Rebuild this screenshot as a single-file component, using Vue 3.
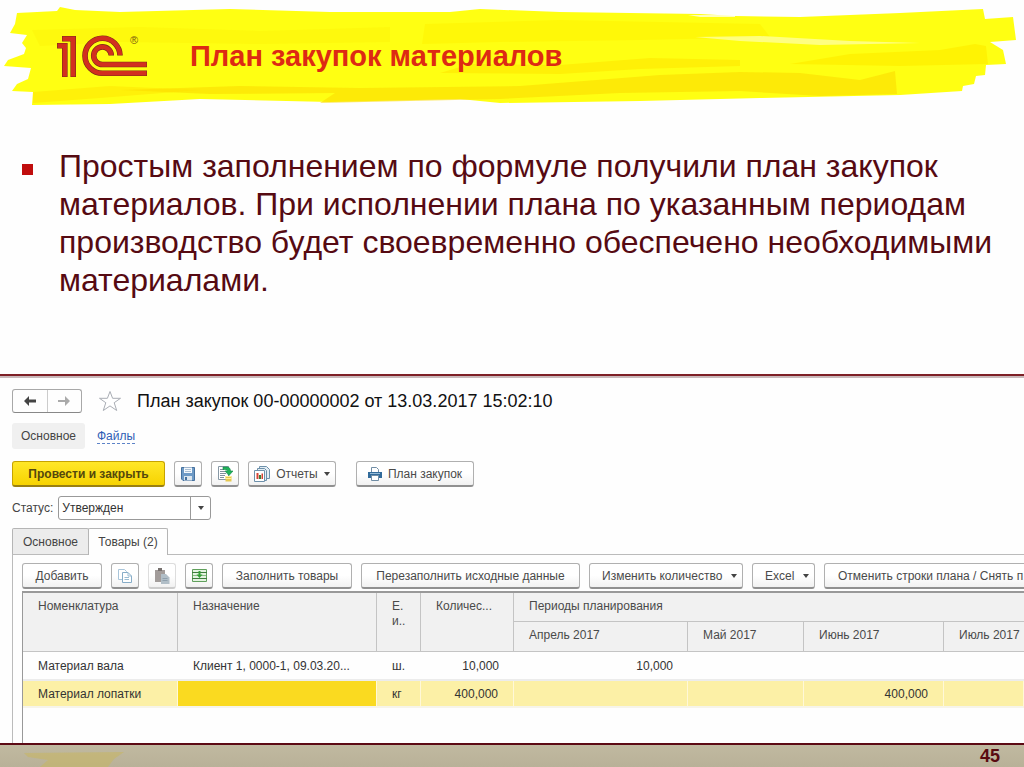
<script setup>
import { ref } from 'vue'

const status = ref('Утвержден')
const months = ['Апрель 2017', 'Май 2017', 'Июнь 2017', 'Июль 2017']
const rows = [
  { name: 'Материал вала', purpose: 'Клиент 1, 0000-1, 09.03.20...', unit: 'ш.', qty: '10,000', plan: ['10,000', '', '', ''] },
  { name: 'Материал лопатки', purpose: '', unit: 'кг', qty: '400,000', plan: ['', '', '400,000', ''], selected: true },
]
</script>

<template>
  <div class="slide">
    <header class="banner">
      <svg class="brush" viewBox="0 0 1024 108" preserveAspectRatio="none" aria-hidden="true">
        <path fill="#ffff12" d="M17 13L57 11L60 7L75 10L120 12L230 9L330 12L450 12L480 9L560 12L700 14L735 16L800 17L900 13L983 9L985 19L1013 17L1016 40L990 42L1003 50L1006 64L986 65L985 75L976 76L974 84L963 86L962 91L900 95L760 98L640 101L500 103L460 99L330 102L200 99L110 104L32 105L33 92L12 91L17 84L28 79L31 68L4 66L8 60L24 54L26 48L22 43L27 35L10 33L15 24Z" />
        <path fill="#fff200" opacity=".55" d="M425 24L560 20L760 24L770 37L640 40L500 42L422 44Z" />
        <path fill="#fbe800" opacity=".28" d="M32 30L140 27L260 31L390 27L390 42L260 44L120 42L40 46Z" />
        <path fill="#ffe600" opacity=".6" d="M470 64L560 65L650 58L740 60L740 66L640 69L560 74L440 73Z" />
        <path fill="#fbdc00" opacity=".6" d="M120 90L240 86L360 88L520 86L660 75L740 72L800 73L860 80L895 71L897 94L820 96L740 91L620 93L500 99L320 103L335 93L210 94Z" />
        <path fill="#fff000" opacity=".8" d="M790 64L850 54L940 50L975 44L986 46L988 64L900 66Z" />
        <path fill="#ffe000" opacity=".45" d="M33 92L110 86L200 90L100 98L33 103Z" />
        <path fill="#ffff9c" opacity=".8" d="M695 37L760 36L850 41L920 43L820 45L740 41Z" />
        <path fill="#fff" opacity=".7" d="M688 15L735 15L735 17L700 17Z" />
      </svg>
      <svg class="logo" viewBox="0 0 92 44" role="img" aria-label="1С">
        <g fill="none" stroke="#7e2c18" stroke-width="5.6">
          <path d="M1 10.8H8.800V42M6 3.800H17.200V42" />
          <path d="M64 20.500A17.500 17.500 0 1 0 46.500 38.300H91" />
          <path d="M55.300 20.500A8.800 8.800 0 1 0 46.500 29.500H91" />
        </g>
        <g fill="none" stroke="#d2301f" stroke-width="4.400">
          <path d="M1.600 10.800H8.800V41.500M6.600 3.800H17.200V41.500" />
          <path d="M64 20A17.500 17.500 0 1 0 46.500 38.300H90.500" />
          <path d="M55.300 20A8.800 8.800 0 1 0 46.500 29.500H90.500" />
        </g>
      </svg>
      <span class="reg">®</span>
      <h1>План закупок материалов</h1>
    </header>

    <ul class="points">
      <li>Простым заполнением по формуле получили план закупок материалов. При исполнении плана по указанным периодам производство будет своевременно обеспечено необходимыми материалами.</li>
    </ul>

    <main class="window">
      <div class="titlebar">
        <div class="nav">
          <button type="button" aria-label="Назад"><svg width="14" height="10" viewBox="0 0 14 10"><path d="M6 0L1 5L6 10V6.500H13V3.500H6Z" fill="#444" /></svg></button>
          <button type="button" aria-label="Вперед"><svg width="14" height="10" viewBox="0 0 14 10"><path d="M8 0L13 5L8 10V6H1V4H8Z" fill="#aaa" /></svg></button>
        </div>
        <button type="button" class="star" aria-label="Избранное"><svg width="24" height="22" viewBox="0 0 24 22"><path d="M12 1.500L14.600 8.300H22.500L16.200 12.700L18.700 20.500L12 15.900L5.300 20.500L7.800 12.700L1.500 8.300H9.400Z" fill="#fff" stroke="#a9adb4" /></svg></button>
        <h2>План закупок 00-00000002 от 13.03.2017 15:02:10</h2>
      </div>

      <nav class="sections">
        <a href="#main" class="current">Основное</a>
        <a href="#files" class="files"><span>Файлы</span></a>
      </nav>

      <div class="commands">
        <button type="button" class="btn primary">Провести и закрыть</button>
        <button type="button" class="btn icon" aria-label="Записать">
          <svg width="16" height="16" viewBox="0 0 16 16"><path d="M1.500 1.500H14.500V14.500H3L1.500 13Z" fill="#6e9ac6" stroke="#46719e" /><path d="M4 1.500H12V7H4Z" fill="#f4f8fc" /><path d="M5 3.500H11M5 5.500H11" stroke="#a9bfd4" /><path d="M4 10H12V14.500H4Z" fill="#dce6ee" /><path d="M5 11H7V14H5Z" fill="#46719e" /></svg>
        </button>
        <button type="button" class="btn icon" aria-label="Провести">
          <svg width="16" height="16" viewBox="0 0 16 16"><path d="M1.500.500H11.500V13.500H1.500Z" fill="#fff" stroke="#8798a5" /><path d="M3 3.500H7M3 5.500H8M3 7.500H9M3 9.500H8M3 11.500H7" stroke="#80909c" /><path d="M6 1H10C12.500 1 13.500 3 13.500 5H16L12 9.500L8 5H10.500C10.500 4 9 3.500 6 3.500Z" fill="#1fb25a" stroke="#118744" stroke-width=".6" /><path d="M8.500 10H14.500V15.500H8.500Z" fill="#e6c84f" /><path d="M8.500 10.500H14.500M8.500 12.500H14.500" stroke="#fff09b" /></svg>
        </button>
        <button type="button" class="btn reports">
          <svg width="16" height="16" viewBox="0 0 16 16"><path d="M5.500.500H12.500L15.500 3.500V12.500H5.500Z" fill="#e3edf4" stroke="#6e91ab" /><path d="M3.500 2.500H10.500L12.500 4.500V14.500H3.500Z" fill="#e3edf4" stroke="#6e91ab" /><path d="M.500 4.500H10.500V15.500H.500Z" fill="#fff" stroke="#6e91ab" /><path d="M2.500 7H4.500V13H2.500Z" fill="#d64435" /><path d="M5 9H7V13H5Z" fill="#397f3a" /><path d="M7.500 7.500H9V13H7.500Z" fill="#d64435" /></svg>
          Отчеты<i class="caret"></i>
        </button>
        <button type="button" class="btn print">
          <svg width="14" height="14" viewBox="0 0 14 14"><path d="M3.500 5V.500H8.500L10.500 2.500V5" fill="#fff" stroke="#708da5" /><path d="M0 5H14V11H0Z" fill="#326b9b" /><path d="M2 6.500H12" stroke="#94b9d5" /><path d="M3.500 8.500H10.500V13.500H3.500Z" fill="#fff" stroke="#708da5" /></svg>
          План закупок
        </button>
      </div>

      <div class="status">
        <label for="status">Статус:</label>
        <div class="combo">
          <input id="status" v-model="status" type="text" />
          <button type="button" aria-label="Выбрать статус"><i class="caret"></i></button>
        </div>
      </div>

      <div class="tabs" role="tablist">
        <button type="button" role="tab" aria-selected="false">Основное</button>
        <button type="button" role="tab" aria-selected="true" class="active">Товары (2)</button>
      </div>

      <section class="pane">
        <div class="tools">
          <button type="button" class="btn add">Добавить</button>
          <button type="button" class="btn icon" aria-label="Скопировать">
            <svg width="14" height="14" viewBox="0 0 14 14"><path d="M.500.500H6.500L8.500 2.500V10.500H.500Z" fill="#fff" stroke="#a9c5da" /><path d="M4.500 3.500H10L13.500 7V13.500H4.500Z" fill="#fff" stroke="#87adc8" /><path d="M10 3.500V7H13.500M6.500 8.500H11M6.500 10.500H11" fill="none" stroke="#9bbdd3" /></svg>
          </button>
          <button type="button" class="btn icon faded" aria-label="Вставить">
            <svg width="16" height="16" viewBox="0 0 16 16"><path d="M1 2H11V14H1Z" fill="#a29c9a" /><path d="M4 0H8V3H4Z" fill="#77716f" /><path d="M7 6H12L15.500 9.500V16H7Z" fill="#b1bec7" /><path d="M8.500 10.500H13.500M8.500 12.500H13.500" stroke="#8fa0ad" /></svg>
          </button>
          <button type="button" class="btn icon" aria-label="Подобрать">
            <svg width="15" height="13" viewBox="0 0 15 13"><path d="M.500.500H14.500V12.500H.500Z" fill="#e4f3e1" stroke="#60a05c" /><path d="M0 3.500H15M0 9.500H15" stroke="#3f7e3d" /><path d="M1 6.500H14" stroke="#87bc82" /><path d="M6.500 2H8.500V5.500H10.500L7.500 9L4.500 5.500H6.500Z" fill="#35a137" /></svg>
          </button>
          <button type="button" class="btn fill">Заполнить товары</button>
          <button type="button" class="btn refill">Перезаполнить исходные данные</button>
          <button type="button" class="btn menu change">Изменить количество<i class="caret"></i></button>
          <button type="button" class="btn menu excel">Excel<i class="caret"></i></button>
          <button type="button" class="btn cancel">Отменить строки плана / Снять п</button>
        </div>

        <div class="grid">
          <table>
            <colgroup>
              <col class="c-name" /><col class="c-purpose" /><col class="c-unit" /><col class="c-qty" />
              <col class="c-apr" /><col class="c-may" /><col class="c-jun" /><col />
            </colgroup>
            <thead>
              <tr>
                <th rowspan="2">Номенклатура</th>
                <th rowspan="2">Назначение</th>
                <th rowspan="2">Е.<br />и..</th>
                <th rowspan="2">Количес...</th>
                <th colspan="4">Периоды планирования</th>
              </tr>
              <tr class="months">
                <th v-for="m in months" :key="m">{{ m }}</th>
              </tr>
            </thead>
            <tbody>
              <tr v-for="r in rows" :key="r.name" :class="{ selected: r.selected }">
                <td>{{ r.name }}</td>
                <td class="purpose">{{ r.purpose }}</td>
                <td>{{ r.unit }}</td>
                <td class="num">{{ r.qty }}</td>
                <td v-for="(p, i) in r.plan" :key="i" class="num">{{ p }}</td>
              </tr>
            </tbody>
          </table>
        </div>
      </section>
    </main>

    <footer class="foot">
      <svg class="smear" viewBox="0 0 110 22" aria-hidden="true"><path d="M24 8L124 7L114 14L108 22H40L48 15L28 12Z" fill="#c6b566" opacity=".6" /></svg>
      <span>45</span>
    </footer>
  </div>
</template>

<style>
body {
  margin: 0;
  background: #fff;
}
</style>

<style scoped>
* {
  box-sizing: border-box;
}
.slide {
  display: flex;
  flex-direction: column;
  min-height: 100vh;
  overflow: hidden;
  font-family: "Liberation Sans", Arial, sans-serif;
  font-size: 12px;
  color: #444;
  background: #fefefe;
}
button,
input {
  font: inherit;
  color: inherit;
  margin: 0;
}
.banner {
  position: relative;
  display: flex;
  align-items: flex-start;
  height: 108px;
  padding: 35px 24px 0 56px;
}
.brush {
  position: absolute;
  inset: 0;
  width: 100%;
  height: 100%;
}
.logo {
  position: relative;
  width: 92px;
  height: 44px;
}
.reg {
  position: absolute;
  left: 130px;
  top: 34px;
  font-size: 11px;
  line-height: 12px;
  color: #7c5a10;
}
h1 {
  position: relative;
  margin: 4px 0 0 42px;
  font-size: 29px;
  line-height: 34px;
  font-weight: 700;
  color: #dd2a14;
}
.points {
  flex: 1 0 auto;
  margin: 0;
  padding: 39px 24px 60px 59px;
  list-style: none;
  font-size: 32px;
  line-height: 38px;
  color: #560a12;
}
.points li {
  position: relative;
}
.points li::before {
  content: "";
  position: absolute;
  left: -37px;
  top: 17px;
  width: 11px;
  height: 11px;
  background: #c00d0d;
}
.window {
  height: 371px;
  padding: 13px 0 0 12px;
  border-top: 2px solid #7e2026;
  border-bottom: 2px solid #5c0a14;
  background: #fefefe;
  box-shadow: inset 0 2px 0 #c9b9bb;
  display: flex;
  flex-direction: column;
}
.titlebar {
  display: flex;
  align-items: center;
  height: 24px;
}
.nav {
  display: flex;
  width: 70px;
  height: 24px;
  border: 1px solid #a8a8a8;
  border-bottom-color: #888;
  border-radius: 3px;
}
.nav button {
  flex: 1;
  display: flex;
  align-items: center;
  justify-content: center;
  padding: 0;
  border: 0;
  background: none;
}
.nav button + button {
  border-left: 1px solid #ccc;
}
.star {
  display: flex;
  margin-left: 16px;
  padding: 0;
  border: 0;
  background: none;
}
h2 {
  margin: 0 0 0 15px;
  font-size: 18px;
  line-height: 24px;
  font-weight: 400;
  color: #111;
}
.sections {
  display: flex;
  align-items: center;
  gap: 12px;
  height: 26px;
  margin-top: 10px;
}
.sections a {
  font-size: 12px;
  line-height: 26px;
  text-decoration: none;
  color: #444;
}
.sections .current {
  padding: 0 9px;
  border-radius: 3px;
  background: #f0f0f0;
}
.sections .files {
  line-height: 14px;
  color: #2f5db5;
  border-bottom: 1px dashed #5d83c8;
}
.commands {
  display: flex;
  gap: 9px;
  margin-top: 12px;
}
.btn {
  display: flex;
  align-items: center;
  justify-content: center;
  flex: none;
  height: 26px;
  padding: 0;
  border: 1px solid #b0b0b0;
  border-bottom: 2px solid #909090;
  border-radius: 3px;
  background: linear-gradient(#fff 50%, #f1f1f1);
  font-size: 12px;
  color: #4a4a4a;
  white-space: nowrap;
}
.btn.icon {
  width: 28px;
}
.btn.faded {
  border-color: #ddd #ddd #ccc;
}
.btn.primary {
  width: 153px;
  border-color: #c6a300 #c6a300 #9a8010;
  background: linear-gradient(#ffe728, #f7d300);
  font-weight: 700;
  color: #54480c;
}
.btn.reports,
.btn.print {
  gap: 6px;
}
.btn.reports {
  width: 88px;
}
.btn.print {
  width: 118px;
  margin-left: 11px;
}
.btn.add {
  width: 80px;
}
.btn.fill {
  width: 130px;
}
.btn.refill {
  width: 219px;
}
.btn.change {
  width: 154px;
}
.btn.excel {
  width: 63px;
}
.btn.cancel {
  width: 240px;
  padding-left: 13px;
  justify-content: flex-start;
}
.btn.menu {
  padding: 0 5px 0 12px;
  justify-content: space-between;
}
.caret {
  border: 3px solid transparent;
  border-top: 4px solid #444;
  border-bottom: 0;
}
.status {
  display: flex;
  align-items: center;
  gap: 5px;
  height: 24px;
  margin-top: 9px;
}
.combo {
  display: flex;
  width: 153px;
  height: 24px;
  border: 1px solid #999;
  border-radius: 3px;
  background: #fff;
}
.combo input {
  flex: 1;
  min-width: 0;
  padding: 0 3px;
  border: 0;
  background: none;
  color: #333;
}
.combo button {
  display: flex;
  align-items: center;
  justify-content: center;
  width: 20px;
  padding: 0;
  border: 0;
  border-left: 1px solid #999;
  background: none;
}
.tabs {
  display: flex;
  height: 27px;
  margin-top: 8px;
  position: relative;
}
.tabs button {
  width: 77px;
  height: 26px;
  padding: 0;
  border: 1px solid #b5b5b5;
  border-bottom: 0;
  border-radius: 2px 2px 0 0;
  background: #ececec;
  color: #444;
}
.tabs .active {
  width: 80px;
  height: 27px;
  margin-left: -1px;
  background: #fefefe;
}
.pane {
  flex: 1;
  min-height: 0;
  margin-top: -1px;
  padding: 8px 0 0 10px;
  border-top: 1px solid #bbb;
  border-left: 1px solid #bbb;
  display: flex;
  flex-direction: column;
  overflow: hidden;
}
.tools {
  display: flex;
  gap: 9px;
  margin-left: -1px;
}
.grid {
  flex: 1;
  margin: 2px 0 0 -1px;
  border-top: 2px solid #999;
  border-left: 1px solid #999;
}
table {
  width: 100%;
  table-layout: fixed;
  border-collapse: separate;
  border-spacing: 0;
}
.c-name { width: 155px; }
.c-purpose { width: 199px; }
.c-unit { width: 44px; }
.c-qty { width: 93px; }
.c-apr { width: 174px; }
.c-may { width: 116px; }
.c-jun { width: 140px; }
th {
  height: 29px;
  padding: 6px 0 0 15px;
  border-right: 1px solid #c4c4c4;
  border-bottom: 1px solid #c4c4c4;
  background: #f1f1f1;
  font-weight: 400;
  line-height: 15px;
  text-align: left;
  vertical-align: top;
  white-space: nowrap;
  color: #4a4a4a;
}
.months th {
  height: 30px;
}
th:last-child {
  border-right: 0;
}
td {
  height: 29px;
  padding: 0 0 0 15px;
  border-bottom: 2px solid #ececec;
  line-height: 14px;
  white-space: nowrap;
  color: #333;
}
td.num {
  padding: 0 15px 0 0;
  text-align: right;
}
.selected td {
  height: 27px;
  border-right: 1px solid #fff8d8;
  border-bottom-color: #f6f4ea;
  background: #fcf0a6;
}
.selected .purpose {
  background: #fada20;
}
.foot {
  position: relative;
  display: flex;
  align-items: center;
  justify-content: flex-end;
  height: 22px;
  padding-right: 24px;
  background: linear-gradient(#c0b9a0, #b9b198);
  font-size: 18px;
  line-height: 22px;
  font-weight: 700;
  color: #5a0a10;
}
.smear {
  position: absolute;
  left: 0;
  top: 0;
  width: 110px;
  height: 22px;
  overflow: visible;
}
</style>
